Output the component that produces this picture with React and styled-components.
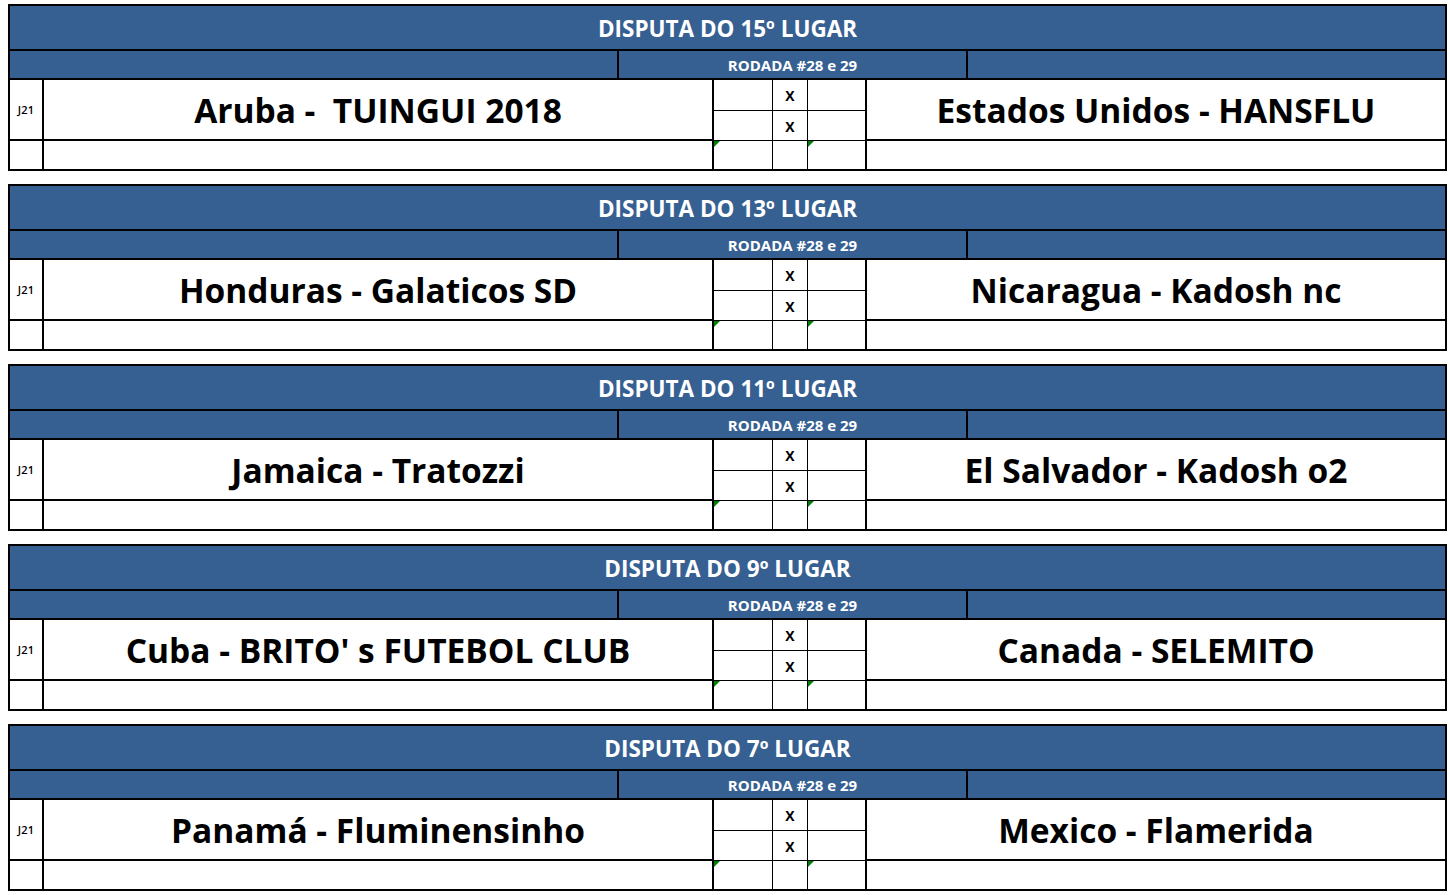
import React from "react";
import styled, { createGlobalStyle } from "styled-components";

const GlobalStyle = createGlobalStyle`
  * { box-sizing: border-box; }
  body {
    margin: 0;
    padding: 4px 0 0 8px;
    background: #fff;
    font-family: "Open Sans", "Liberation Sans", sans-serif;
  }
`;

const BLUE = "#366092";

const Page = styled.div`
  display: flex;
  flex-direction: column;
  gap: 13px;
  width: 1439px;
`;

const Block = styled.div`
  border: 2px solid #000;
  display: flex;
  flex-direction: column;
`;

const TitleRow = styled.div`
  height: 45px;
  background: ${BLUE};
  border-bottom: 2px solid #000;
  color: #fff;
  font-weight: 700;
  font-size: 22.5px;
  display: flex;
  align-items: center;
  justify-content: center;
  padding-top: 1px;
`;

const RoundRow = styled.div`
  height: 29px;
  background: ${BLUE};
  border-bottom: 2px solid #000;
  display: grid;
  grid-template-columns: 609px 349px 1fr;
`;

const RoundCell = styled.div`
  border-right: ${(p) => (p.$last ? "none" : "2px solid #000")};
  color: #fff;
  font-weight: 700;
  font-size: 15px;
  display: flex;
  align-items: center;
  justify-content: center;
  padding-top: 1px;
`;

const MatchGrid = styled.div`
  display: grid;
  grid-template-columns: 34px 670px 59px 35px 59px 1fr;
  grid-template-rows: 31px 30px 28px;
`;

const Cell = styled.div`
  position: relative;
  grid-column: ${(p) => p.$col};
  grid-row: ${(p) => p.$row};
  border-right: ${(p) => (p.$rb ? `${p.$rb}px solid #000` : "none")};
  border-bottom: ${(p) => (p.$bb ? `${p.$bb}px solid #000` : "none")};
  display: flex;
  align-items: center;
  justify-content: center;
`;

const Code = styled.span`
  font-size: 11px;
  font-weight: 600;
  color: #000;
  letter-spacing: 0.2px;
`;

const Team = styled.span`
  font-size: 33.5px;
  font-weight: 700;
  color: #000;
  white-space: pre;
`;

const Versus = styled.span`
  font-size: 14px;
  font-weight: 700;
  color: #000;
  padding-top: 1px;
`;

const Flag = styled.span`
  position: absolute;
  top: 0;
  left: 0;
  width: 0;
  height: 0;
  border-top: 6px solid #008000;
  border-right: 6px solid transparent;
`;

const matches = [
  { place: "15º", home: "Aruba -  TUINGUI 2018", away: "Estados Unidos - HANSFLU" },
  { place: "13º", home: "Honduras - Galaticos SD", away: "Nicaragua - Kadosh nc" },
  { place: "11º", home: "Jamaica - Tratozzi", away: "El Salvador - Kadosh o2" },
  { place: "9º", home: "Cuba - BRITO' s FUTEBOL CLUB", away: "Canada - SELEMITO" },
  { place: "7º", home: "Panamá - Fluminensinho", away: "Mexico - Flamerida" },
];

const MatchBlock = ({ place, home, away }) => (
  <Block>
    <TitleRow>DISPUTA DO {place} LUGAR</TitleRow>
    <RoundRow>
      <RoundCell />
      <RoundCell>RODADA #28 e 29</RoundCell>
      <RoundCell $last />
    </RoundRow>
    <MatchGrid>
      {/* linha do time */}
      <Cell $col="1" $row="1 / 3" $rb={2} $bb={2}>
        <Code>J21</Code>
      </Cell>
      <Cell $col="2" $row="1 / 3" $rb={2} $bb={2}>
        <Team>{home}</Team>
      </Cell>
      <Cell $col="3" $row="1" $rb={1} $bb={1} />
      <Cell $col="4" $row="1" $rb={1} $bb={1}>
        <Versus>X</Versus>
      </Cell>
      <Cell $col="5" $row="1" $rb={2} $bb={1} />
      <Cell $col="3" $row="2" $rb={1} $bb={1} />
      <Cell $col="4" $row="2" $rb={1} $bb={1}>
        <Versus>X</Versus>
      </Cell>
      <Cell $col="5" $row="2" $rb={2} $bb={1} />
      <Cell $col="6" $row="1 / 3" $bb={2}>
        <Team>{away}</Team>
      </Cell>

      {/* linha de baixo */}
      <Cell $col="1" $row="3" $rb={2} />
      <Cell $col="2" $row="3" $rb={2} />
      <Cell $col="3" $row="3" $rb={1}>
        <Flag />
      </Cell>
      <Cell $col="4" $row="3" $rb={1} />
      <Cell $col="5" $row="3" $rb={2}>
        <Flag />
      </Cell>
      <Cell $col="6" $row="3" />
    </MatchGrid>
  </Block>
);

export default function App() {
  return (
    <>
      <GlobalStyle />
      <Page>
        {matches.map((m) => (
          <MatchBlock key={m.place} {...m} />
        ))}
      </Page>
    </>
  );
}
